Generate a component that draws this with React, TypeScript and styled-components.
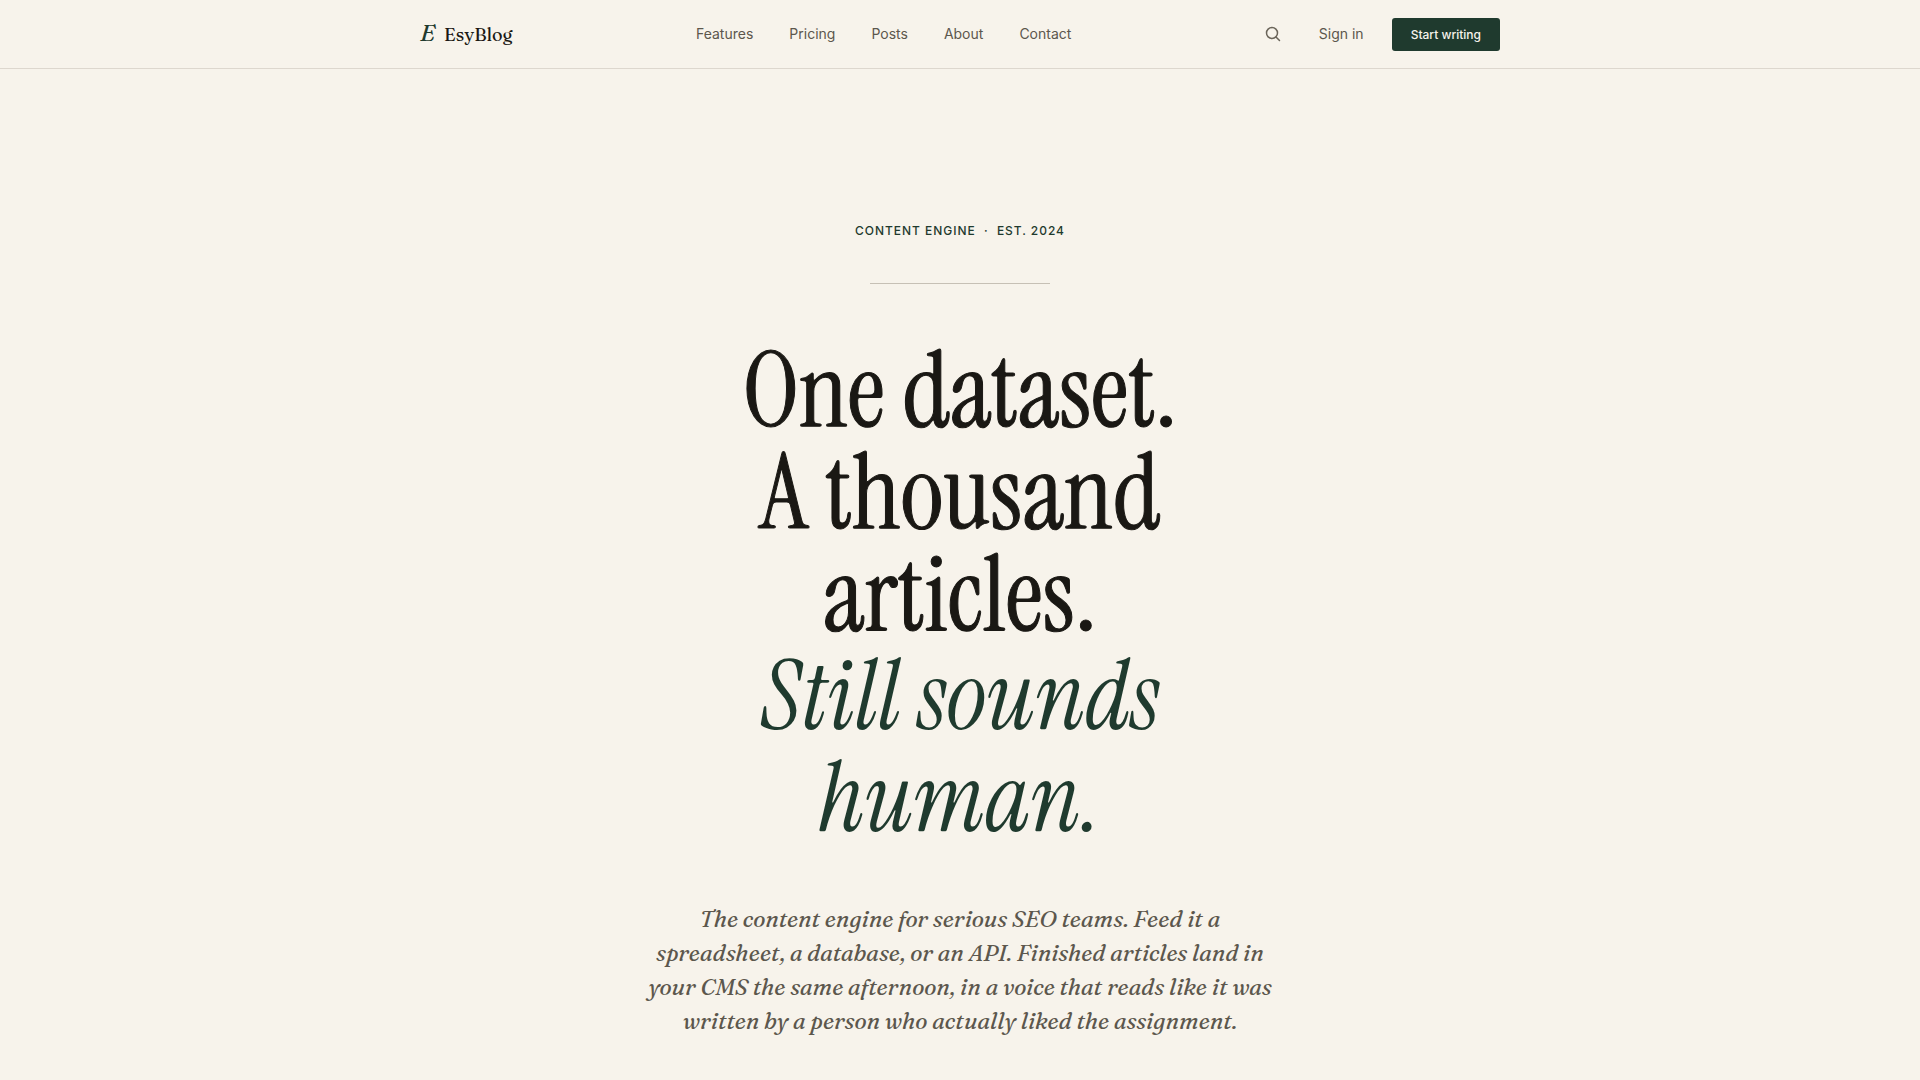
import React from "react";
import styled, { createGlobalStyle } from "styled-components";

const serif = `Fraunces, "Liberation Serif", serif`;
const display = `"Instrument Serif", "Liberation Serif", serif`;
const sans = `Inter, "Liberation Sans", sans-serif`;

const GlobalStyle = createGlobalStyle`
  *, *::before, *::after { box-sizing: border-box; }
  body {
    margin: 0;
    background: #f7f3eb;
    color: #1a1814;
    font-family: ${sans};
    -webkit-font-smoothing: antialiased;
  }
`;

const Header = styled.header`
  border-bottom: 1px solid #ddd7ce;
`;

const HeaderInner = styled.div`
  max-width: 1128px;
  min-height: 68px;
  margin: 0 auto;
  padding: 0 24px;
  display: flex;
  align-items: center;
  justify-content: space-between;
`;

const Brand = styled.a`
  display: flex;
  align-items: baseline;
  gap: 9px;
  color: #1a1814;
  font: 500 18px/24px ${serif};
  text-decoration: none;
`;

const BrandMark = styled.span`
  color: #1f3a2e;
  font-size: 24px;
  font-style: italic;
`;

const Nav = styled.nav`
  display: flex;
  gap: 36px;
`;

const TextLink = styled.a`
  color: #5c574d;
  font-size: 14px;
  line-height: 20px;
  text-decoration: none;
`;

const Actions = styled.div`
  display: flex;
  align-items: center;
  gap: 28px;
`;

const IconButton = styled.button`
  display: flex;
  padding: 8px 10px;
  border: 0;
  background: none;
  color: #6b655a;
`;

const PrimaryButton = styled.button`
  padding: 6px 19px;
  border: 0;
  border-radius: 3px;
  background: #1f3a2e;
  color: #f7f3eb;
  font: 500 12px/21px ${sans};
`;

const Hero = styled.main`
  max-width: 688px;
  margin: 0 auto;
  padding: 152px 24px 42px;
  display: flex;
  flex-direction: column;
  align-items: center;
  text-align: center;
`;

const Eyebrow = styled.p`
  margin: 0;
  color: #1f3a2e;
  font-size: 12px;
  font-weight: 500;
  line-height: 20px;
  letter-spacing: 0.08em;
  text-transform: uppercase;
  white-space: pre;
`;

const Rule = styled.hr`
  width: 180px;
  margin: 42px 0 56px;
  border: 0;
  border-top: 1px solid #c6c0b5;
`;

const Title = styled.h1`
  max-width: 560px;
  margin: 0;
  font: 400 104px/102px ${display};
  -webkit-text-stroke: 1px currentColor;

  em {
    display: block;
    color: #1f3a2e;
    font-size: 96px;
    -webkit-text-stroke: 0;
  }
`;

const Lead = styled.p`
  margin: 52px 0 0;
  color: #5c574d;
  font: italic 400 23px/34px ${serif};
`;

const links = ["Features", "Pricing", "Posts", "About", "Contact"];

function SearchIcon() {
  return (
    <svg width="16" height="16" viewBox="0 0 16 16" fill="none" stroke="currentColor" strokeWidth="1.5" aria-hidden="true">
      <circle cx="7" cy="7" r="5.5" />
      <path d="M11 11l3.5 3.5" strokeLinecap="round" />
    </svg>
  );
}

export default function App() {
  return (
    <>
      <GlobalStyle />
      <Header>
        <HeaderInner>
          <Brand href="#">
            <BrandMark>E</BrandMark>
            <span>EsyBlog</span>
          </Brand>
          <Nav aria-label="Main">
            {links.map((label) => (
              <TextLink key={label} href={`#${label.toLowerCase()}`}>
                {label}
              </TextLink>
            ))}
          </Nav>
          <Actions>
            <IconButton type="button" aria-label="Search">
              <SearchIcon />
            </IconButton>
            <TextLink href="#signin">Sign in</TextLink>
            <PrimaryButton type="button">Start writing</PrimaryButton>
          </Actions>
        </HeaderInner>
      </Header>
      <Hero>
        <Eyebrow>{"Content engine \u00a0·\u00a0 Est. 2024"}</Eyebrow>
        <Rule />
        <Title>
          One dataset.
          <br />
          A thousand articles.
          <em>Still sounds human.</em>
        </Title>
        <Lead>
          The content engine for serious SEO teams. Feed it a spreadsheet, a
          database, or an API. Finished articles land in your CMS the same
          afternoon, in a voice that reads like it was written by a person who
          actually liked the assignment.
        </Lead>
      </Hero>
    </>
  );
}
